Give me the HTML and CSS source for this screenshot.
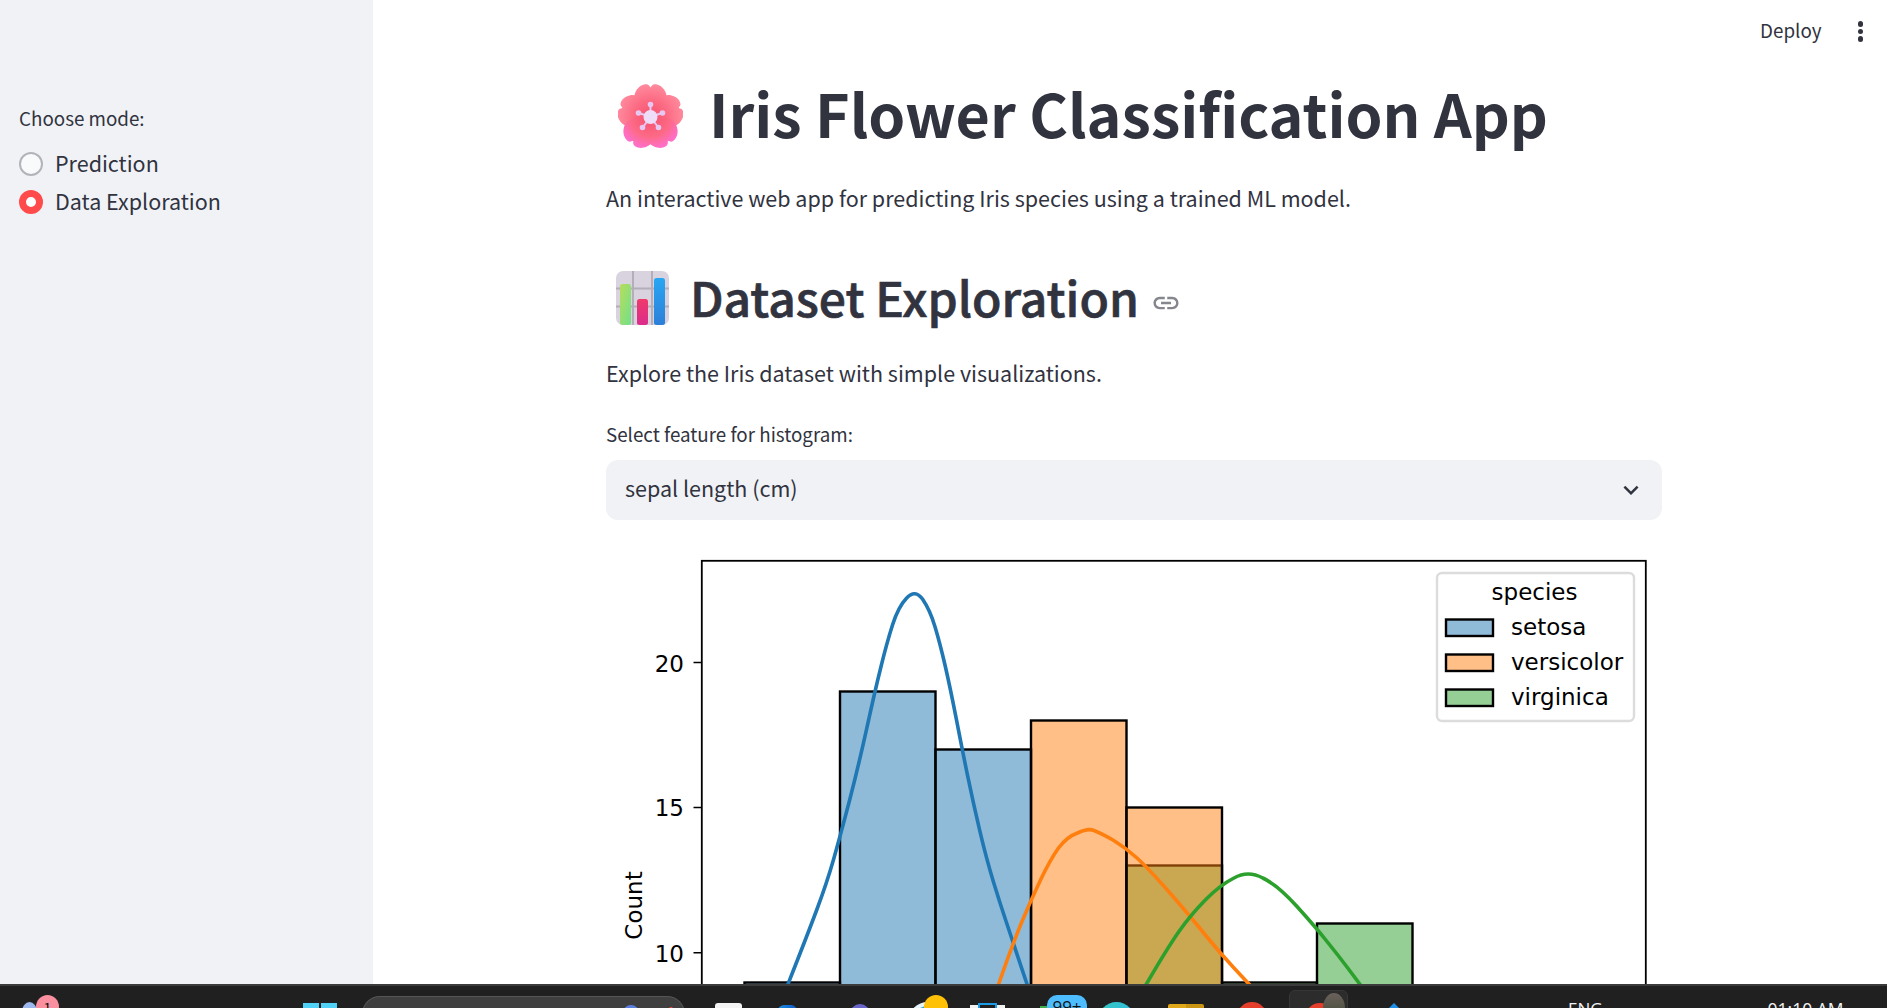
FILE: index.html
```html
<!DOCTYPE html>
<html lang="en">
<head>
    <meta charset="UTF-8">
    <meta name="viewport" content="width=device-width, initial-scale=1.0">
    <title>Iris Flower Classification App</title>
    <link rel="stylesheet" href="styles.css">
</head>
<body>
    <div class="window">
        <aside class="sidebar">
            <div class="side-label">Choose mode:</div>
            <div class="radio-row"><span class="radio"></span>Prediction</div>
            <div class="radio-row"><span class="radio radio-on"></span>Data Exploration</div>
        </aside>

        <main class="main">
            <header class="topbar">
                <span class="deploy">Deploy</span>
                <span class="dots"><i></i><i></i><i></i></span>
            </header>

            <div class="content">
                <h1 class="title">
                    <svg class="flower" viewBox="0 0 65 64">
                        <defs>
                            <radialGradient id="petalTop" gradientUnits="userSpaceOnUse" cx="32.5" cy="33" r="33">
                                <stop offset="0" stop-color="#f4506c"/>
                                <stop offset="0.5" stop-color="#fc6a82"/>
                                <stop offset="1" stop-color="#ff8a9d"/>
                            </radialGradient>
                            <radialGradient id="petalLow" gradientUnits="userSpaceOnUse" cx="32.5" cy="33" r="33">
                                <stop offset="0" stop-color="#f4506c"/>
                                <stop offset="0.6" stop-color="#fd6a86"/>
                                <stop offset="1" stop-color="#ff6fd0"/>
                            </radialGradient>
                            <path id="petal" d="M32.5 34C20 27 13 16 18 7C22 0 29 -1 31 1.500L32.500 3.500L34 1.500C36 -1 43 0 47 7C52 16 45 27 32.500 34Z"/>
                        </defs>
                        <use href="#petal" fill="url(#petalTop)"/>
                        <use href="#petal" fill="url(#petalTop)" transform="rotate(72 32.5 33)"/>
                        <use href="#petal" fill="url(#petalTop)" transform="rotate(288 32.5 33)"/>
                        <use href="#petal" fill="url(#petalLow)" transform="rotate(144 32.5 33)"/>
                        <use href="#petal" fill="url(#petalLow)" transform="rotate(216 32.5 33)"/>
                        <g stroke="#e6c8f2" stroke-width="2" fill="#e6c8f2">
                            <line x1="32.5" y1="33" x2="32.5" y2="21"/>
                            <line x1="32.500" y1="33" x2="44" y2="29"/>
                            <line x1="32.500" y1="33" x2="21" y2="29"/>
                            <line x1="32.500" y1="33" x2="40" y2="43"/>
                            <line x1="32.500" y1="33" x2="25" y2="43"/>
                            <circle cx="32.5" cy="20.500" r="1.800"/>
                            <circle cx="44.500" cy="29" r="1.800"/>
                            <circle cx="20.500" cy="29" r="1.800"/>
                            <circle cx="40.500" cy="43.500" r="1.800"/>
                            <circle cx="24.500" cy="43.500" r="1.800"/>
                        </g>
                        <circle cx="32.5" cy="33" r="7" fill="#eedcf9"/>
                    </svg>
                    Iris Flower Classification App
                </h1>
                <p class="intro">An interactive web app for predicting Iris species using a trained ML model.</p>

                <h2 class="section">
                    <svg class="barsicon" viewBox="616 271 53 54">
                        <defs>
                            <linearGradient id="barGreen" x1="0" y1="0" x2="1" y2="1">
                                <stop offset="0" stop-color="#b7dd5c"/>
                                <stop offset="1" stop-color="#72e08a"/>
                            </linearGradient>
                            <linearGradient id="barPink" x1="0" y1="0" x2="0" y2="1">
                                <stop offset="0" stop-color="#ef3a6a"/>
                                <stop offset="1" stop-color="#dc2c8c"/>
                            </linearGradient>
                            <linearGradient id="barBlue" x1="0" y1="0" x2="0" y2="1">
                                <stop offset="0" stop-color="#28a6f2"/>
                                <stop offset="1" stop-color="#2d7fd8"/>
                            </linearGradient>
                        </defs>
                        <rect x="616" y="271" width="53" height="54" rx="7" fill="#d9d3df"/>
                        <path d="M633 271V325M652 271V325M616 288.500H669M616 306.500H669" stroke="#b4aeb9" stroke-width="2"/>
                        <rect x="620" y="284" width="11" height="41" rx="2.500" fill="url(#barGreen)"/>
                        <rect x="637" y="299" width="11" height="26" rx="2.500" fill="url(#barPink)"/>
                        <rect x="654" y="278" width="11" height="47" rx="2.500" fill="url(#barBlue)"/>
                    </svg>
                    <span class="section-text">Dataset Exploration</span>
                    <svg class="linkicon" viewBox="0 0 24 24"><path d="M3.900 12c0-1.710 1.390-3.100 3.100-3.100h4V7H7c-2.760 0-5 2.240-5 5s2.240 5 5 5h4v-1.900H7c-1.710 0-3.100-1.390-3.100-3.100zM8 13h8v-2H8v2zm9-6h-4v1.900h4c1.710 0 3.100 1.390 3.100 3.100s-1.390 3.100-3.100 3.100h-4V17h4c2.760 0 5-2.240 5-5s-2.240-5-5-5z"/></svg>
                </h2>
                <p class="explore">Explore the Iris dataset with simple visualizations.</p>

                <label class="select-label">Select feature for histogram:</label>
                <div class="select">
                    <span class="select-value">sepal length (cm)</span>
                    <svg class="chevron" viewBox="0 0 24 24"><path d="M16.590 8.590L12 13.170 7.410 8.590 6 10l6 6 6-6z"/></svg>
                </div>

                <svg class="chart" viewBox="606 536 1056 448">
                    <!-- virginica -->
                    <g class="bars" fill="#2ca02c">
                        <rect x="1126.500" y="865.500" width="95.500" height="400"/>
                        <rect x="1222" y="982.500" width="95" height="300"/>
                        <rect x="1317" y="923.500" width="95.500" height="300"/>
                    </g>
                    <!-- versicolor -->
                    <g class="bars" fill="#ff7f0e">
                        <rect x="1031" y="720.500" width="95.500" height="500"/>
                        <rect x="1126.500" y="807.500" width="95.500" height="400"/>
                    </g>
                    <!-- setosa -->
                    <g class="bars" fill="#1f77b4">
                        <rect x="744.500" y="982.500" width="95.500" height="300"/>
                        <rect x="840" y="691.500" width="95.500" height="500"/>
                        <rect x="935.500" y="749.500" width="95.500" height="500"/>
                    </g>

                    <path class="curve" stroke="#1f77b4" d="M783 997L788.300 983.300Q806.700 936.700 816.700 910Q826.700 883.300 833.400 860Q840 836.700 849.200 801.700Q858.300 766.700 866.700 728.700Q875 690.700 880.900 667Q886.700 643.300 892.500 625Q898.300 606.700 906.700 598Q915 589 922.500 599Q930 610 935 626.700Q940 643.300 945 665Q950 686.700 956.200 718.400Q962.300 750 967.800 776.700Q973.300 803.300 980 831.700Q986.700 860 993.400 881.700Q1000 903.300 1006.700 923.300L1026.700 983.300L1032 999"/>
                    <path class="curve" stroke="#ff7f0e" d="M994 997L999 983Q1013 943 1022 921.500Q1031 900 1040.500 880Q1050 860 1058.500 848Q1067 836.700 1077.500 833Q1088 828 1094 830.500Q1100 832.700 1113 840Q1126 848 1137 858Q1148 868 1169.300 892.300Q1190.600 916.700 1205.300 935Q1220 953 1234 968L1248 983L1262 998"/>
                    <path class="curve" stroke="#2ca02c" d="M1138 998L1147 983Q1168 947 1179.300 931Q1190.600 915 1205.300 900Q1220 885 1234 878Q1248 870 1262.800 878Q1277.600 885 1297 906.500Q1316.400 928 1327 941.500Q1338 955 1348.500 969L1359 983L1370 998"/>

                    <rect class="frame" x="701.800" y="560.800" width="944" height="500"/>
                    <path class="ticks" d="M693.500 662.500H701.800M693.500 807.500H701.800M693.500 952.700H701.800"/>
                    <text class="axis" x="684" y="672" text-anchor="end">20</text>
                    <text class="axis" x="684" y="816" text-anchor="end">15</text>
                    <text class="axis" x="684" y="962" text-anchor="end">10</text>
                    <text class="axis" x="642" y="905.500" text-anchor="middle" transform="rotate(-90 642 905.500)">Count</text>

                    <rect class="legend" x="1437" y="573" width="197" height="148" rx="5"/>
                    <text class="axis" x="1534.500" y="600" text-anchor="middle">species</text>
                    <rect class="swatch" fill="#1f77b4" x="1446" y="619.500" width="47" height="16.500"/>
                    <rect class="swatch" fill="#ff7f0e" x="1446" y="654.500" width="47" height="16.500"/>
                    <rect class="swatch" fill="#2ca02c" x="1446" y="689.500" width="47" height="16.500"/>
                    <text class="axis" x="1511" y="635">setosa</text>
                    <text class="axis" x="1511" y="670">versicolor</text>
                    <text class="axis" x="1511" y="705">virginica</text>
                </svg>
            </div>
        </main>
    </div>

    <footer class="taskbar">
        <span class="tb-weather"></span>
        <span class="tb-count">1</span>
        <span class="tb-start"><i></i><i></i></span>
        <div class="tb-search"><i class="tb-bubble"></i><i class="tb-reddot"></i></div>
        <span class="tb-note"></span>
        <span class="tb-store"></span>
        <span class="tb-teams"></span>
        <span class="tb-ring"></span>
        <span class="tb-yellow"></span>
        <span class="tb-printer"><i></i></span>
        <span class="tb-green"></span>
        <span class="tb-mail">99+</span>
        <span class="tb-teal"></span>
        <span class="tb-folder"></span>
        <span class="tb-red"></span>
        <div class="tb-tile"><i class="tb-arc"></i><i class="tb-avatar"></i></div>
        <span class="tb-diamond"></span>
        <span class="tb-text tb-lang">ENG</span>
        <span class="tb-text tb-time">01:10 AM</span>
    </footer>
</body>
</html>
```

FILE: styles.css
```css
* {
    box-sizing: border-box;
}
body {
    margin: 0;
    height: 1008px;
    overflow: hidden;
    font-family: "Noto Sans CJK SC", "Noto Sans", sans-serif;
    color: #31333f;
    background-color: #fff;
}
i {
    display: block;
}

.window {
    display: flex;
    height: 984px;
    overflow: hidden;
}

/* sidebar */
.sidebar {
    width: 373px;
    flex: none;
    background-color: #f0f2f6;
    padding: 103px 19px 0;
}
.side-label {
    font-size: 18.800px;
    line-height: 30px;
    margin-bottom: 12px;
}
.radio-row {
    display: flex;
    align-items: center;
    gap: 12px;
    font-size: 21.500px;
    line-height: 36px;
    margin-bottom: 2px;
}
.radio {
    width: 24px;
    height: 24px;
    margin-top: 1px;
    border-radius: 50%;
    background-color: #f9fafc;
    border: 2px solid #b3b4ba;
}
.radio-on {
    background-color: #fff;
    border: 7.500px solid #ff4b4b;
}

/* main column */
.main {
    flex: 1;
    min-width: 0;
}
.topbar {
    display: flex;
    justify-content: flex-end;
    gap: 36px;
    height: 69px;
    padding: 15px 24px 0 0;
}
.deploy {
    font-size: 18.800px;
    line-height: 30px;
}
.dots {
    display: flex;
    flex-direction: column;
    gap: 2px;
    margin-top: 6px;
}
.dots i {
    width: 5.500px;
    height: 5.500px;
    border-radius: 50%;
    background-color: #31333f;
}
.content {
    width: 1056px;
    margin-left: 233px;
}

.title {
    display: flex;
    margin: 3px 0 0;
    font-size: 59.200px;
    line-height: 80px;
    font-weight: 700;
}
.flower {
    width: 65px;
    height: 64px;
    margin: 12px 26px 0 12px;
    flex: none;
}
.intro, .explore {
    margin: 0;
    font-size: 21.500px;
    line-height: 36px;
}
.intro {
    margin-top: 28px;
}
.section {
    display: flex;
    margin: 46px 0 0;
    font-size: 48px;
    line-height: 68px;
    font-weight: 500;
}
.section-text {
    -webkit-text-stroke: 0.700px #31333f;
}
.barsicon {
    width: 53px;
    height: 54px;
    margin: 9px 21px 0 10px;
    flex: none;
}
.linkicon {
    width: 30px;
    height: 30px;
    margin: 26px 0 0 12px;
    fill: #85868e;
}
.explore {
    margin-top: 25px;
}
.select-label {
    display: block;
    font-size: 18.800px;
    line-height: 30px;
    margin: 28px 0 11px;
}
.select {
    display: flex;
    justify-content: space-between;
    align-items: center;
    height: 60px;
    padding: 0 16px 0 19px;
    background-color: #f0f2f6;
    border-radius: 12px;
    font-size: 21.500px;
}
.select-value {
    margin-top: -5px;
}
.chevron {
    width: 30px;
    height: 30px;
    fill: #31333f;
}

/* histogram */
.chart {
    display: block;
    width: 1056px;
    height: 448px;
    margin-top: 16px;
}
.bars rect {
    fill-opacity: 0.5;
    stroke: #000;
    stroke-width: 2.400;
}
.curve {
    fill: none;
    stroke-width: 3.600;
}
.frame {
    fill: none;
    stroke: #000;
    stroke-width: 1.800;
}
.ticks {
    stroke: #000;
    stroke-width: 1.500;
}
.axis {
    font-family: "DejaVu Sans", sans-serif;
    font-size: 23px;
    fill: #000;
}
.legend {
    fill: #fff;
    stroke: #dcdcdc;
    stroke-width: 2.400;
}
.swatch {
    fill-opacity: 0.5;
    stroke: #000;
    stroke-width: 2.400;
}

/* desktop taskbar, only the top of it is on screen */
.taskbar {
    display: flex;
    align-items: flex-start;
    height: 24px;
    overflow: hidden;
    background-color: #202020;
    border-top: 2px solid #3b3b3b;
}
.tb-weather {
    width: 15px;
    height: 20px;
    margin: 16px 0 0 22px;
    border-radius: 50%;
    background-color: #9db8ee;
    flex: none;
}
.tb-count {
    width: 23px;
    height: 24px;
    margin: 9px 0 0 -1px;
    border-radius: 50%;
    background-color: #f98f9f;
    color: #111;
    font-size: 14px;
    line-height: 24px;
    text-align: center;
    flex: none;
}
.tb-start {
    display: flex;
    gap: 2px;
    margin: 17px 0 0 244px;
    flex: none;
}
.tb-start i {
    width: 16px;
    height: 16px;
    background-color: #4fd2f6;
}
.tb-search {
    display: flex;
    width: 323px;
    height: 36px;
    margin: 10px 0 0 25px;
    padding-left: 260px;
    background-color: #3f3f3f;
    border: 1px solid #565656;
    border-bottom: none;
    border-radius: 18px;
    flex: none;
}
.tb-bubble {
    width: 16px;
    height: 16px;
    margin-top: 8px;
    border-radius: 50%;
    background-color: #5a7fe0;
}
.tb-reddot {
    width: 4px;
    height: 4px;
    margin: 10px 0 0 30px;
    border-radius: 50%;
    background-color: #e5483a;
}
.tb-note {
    width: 27px;
    height: 20px;
    margin: 17px 0 0 30px;
    border-radius: 3px 3px 0 0;
    background-color: #f4f4f4;
    flex: none;
}
.tb-store {
    width: 19px;
    height: 20px;
    margin: 19px 0 0 36px;
    border-radius: 6px 6px 0 0;
    background: linear-gradient(90deg, #1a8fe0, #1158c8);
    flex: none;
}
.tb-teams {
    width: 20px;
    height: 20px;
    margin: 18px 0 0 53px;
    border-radius: 50%;
    background-color: #6a65c9;
    flex: none;
}
.tb-ring {
    width: 40px;
    height: 40px;
    margin: 16px 0 0 38px;
    border-radius: 50%;
    border: 4px solid #e8f6fb;
    background-color: #2a9fd8;
    flex: none;
}
.tb-yellow {
    width: 24px;
    height: 24px;
    margin: 9px 0 0 -24px;
    border-radius: 50%;
    background-color: #ffc107;
    flex: none;
}
.tb-printer {
    width: 35px;
    height: 20px;
    margin: 19px 0 0 22px;
    padding-left: 8px;
    background-color: #f2f2f2;
    flex: none;
}
.tb-printer i {
    width: 19px;
    height: 20px;
    margin-top: -2px;
    border: 2px solid #1c9be6;
    background-color: #202020;
}
.tb-green {
    width: 14px;
    height: 16px;
    margin: 20px 0 0 35px;
    background-color: #3fae4a;
    flex: none;
}
.tb-mail {
    width: 40px;
    height: 30px;
    margin: 9px 0 0 -7px;
    border-radius: 10px;
    background-color: #4dbdff;
    color: #111;
    font-size: 17px;
    line-height: 24px;
    text-align: center;
    font-family: "Open Sans", sans-serif;
    flex: none;
}
.tb-teal {
    width: 37px;
    height: 37px;
    margin: 16px 0 0 11px;
    border-radius: 50%;
    background: linear-gradient(120deg, #35c9c0, #2fb6e8);
    flex: none;
}
.tb-folder {
    width: 36px;
    height: 20px;
    margin: 18px 0 0 33px;
    border-radius: 2px 2px 0 0;
    background: linear-gradient(90deg, #e0a818 50%, #c99512 50%);
    flex: none;
}
.tb-red {
    width: 30px;
    height: 30px;
    margin: 16px 0 0 33px;
    border-radius: 50%;
    background-color: #e53e2b;
    flex: none;
}
.tb-tile {
    display: flex;
    width: 59px;
    height: 40px;
    margin: 4px 0 0 22px;
    padding-left: 15px;
    border-radius: 6px;
    background-color: #2c2c2c;
    border: 1px solid #363636;
    flex: none;
}
.tb-arc {
    width: 30px;
    height: 30px;
    margin-top: 12px;
    border-radius: 50%;
    background-color: #e53e2b;
    flex: none;
}
.tb-avatar {
    width: 22px;
    height: 30px;
    margin: 2px 0 0 -12px;
    border-radius: 50%;
    background: linear-gradient(180deg, #6a605c, #3e4a30);
    flex: none;
}
.tb-diamond {
    width: 18px;
    height: 18px;
    margin: 17px 0 0 37px;
    background-color: #1e90e8;
    clip-path: polygon(50% 0, 100% 50%, 50% 100%, 0 50%);
    flex: none;
}
.tb-text {
    font-family: "Open Sans", sans-serif;
    line-height: 20px;
    color: #f2f2f2;
    margin-top: 13px;
    flex: none;
}
.tb-lang {
    font-size: 17px;
    margin-left: 165px;
}
.tb-time {
    font-size: 17.500px;
    margin-left: 165px;
}
```
